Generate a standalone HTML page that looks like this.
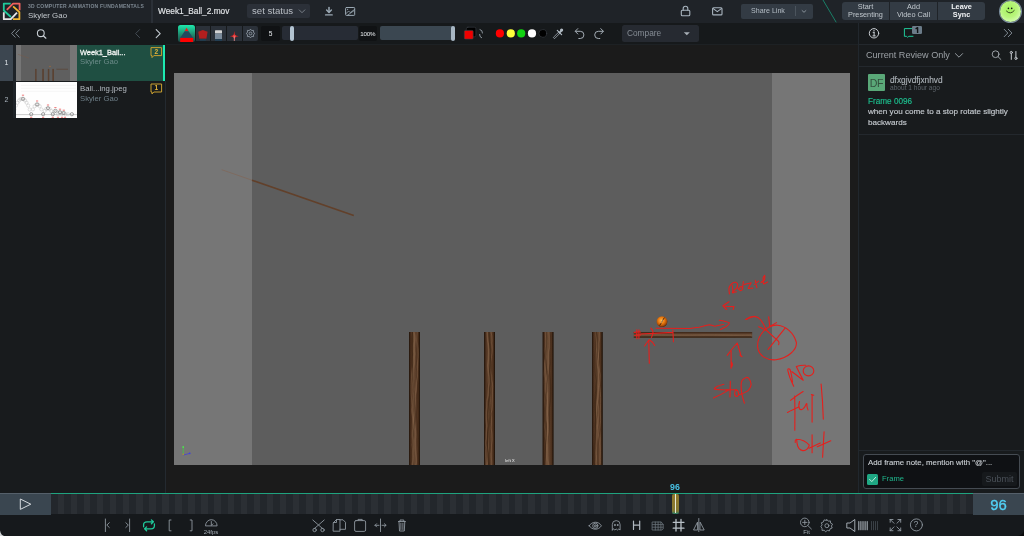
<!DOCTYPE html>
<html><head><meta charset="utf-8">
<style>
*{box-sizing:border-box;margin:0;padding:0}
html,body{width:1024px;height:536px;overflow:hidden;background:#16191c;font-family:"Liberation Sans",sans-serif;}
.a{position:absolute}
.t{position:absolute;white-space:nowrap;line-height:1;-webkit-font-smoothing:antialiased;will-change:transform}
svg{position:absolute;overflow:visible}
</style></head>
<body>
<div class="a" style="left:0;top:0;width:1024px;height:536px;overflow:hidden">

<!-- HEADER -->
<div class="a" style="left:0;top:0;width:1024px;height:23px;background:#1f2328"></div>
<div class="a" style="left:151px;top:0;width:2px;height:23px;background:#2b3037"></div>
<svg style="left:0;top:0" width="24" height="24" viewBox="0 0 24 24" fill="none" stroke-width="1.8" stroke-linejoin="round">
<path d="M10.7,3.6 H3.8 V10.5 L10.9,17" stroke="#1fc99a"/>
<path d="M6.8,9.9 L13.1,3.6 H19.6 V10.3" stroke="#f0625c"/>
<path d="M13.1,6.4 L19.4,12.2 V19.2 H12.9" stroke="#f2b631"/>
<path d="M3.8,12.3 V19.2 H10.8 L17,12.6" stroke="#e6e6e6"/>
</svg>
<div class="t" style="left:28.3px;top:4.2px;font-size:5px;font-weight:bold;letter-spacing:0.23px;color:#7c8791">3D COMPUTER ANIMATION FUNDAMENTALS</div>
<div class="t" style="left:28px;top:12px;font-size:7.9px;color:#c3c8cd">Skyler Gao</div>
<div class="t" style="left:158px;top:6.8px;font-size:8.3px;color:#e3e6e9;-webkit-text-stroke:0.15px #e3e6e9">Week1_Ball_2.mov</div>
<div class="a" style="left:247px;top:4px;width:63px;height:14px;background:#2b3038;border-radius:2px"></div>
<div class="t" style="left:252px;top:6px;font-size:9.6px;color:#b9bec4">set status</div>
<svg style="left:0;top:0" width="1024" height="22" fill="none" stroke-linecap="round" stroke-linejoin="round">
<path d="M299.2,9.9 L302,12.7 L304.8,9.9" stroke="#8c939a" stroke-width="0.8"/>
<!-- download -->
<path d="M329,7.4 V12" stroke="#9aa8b3" stroke-width="1.5"/>
<path d="M326.6,9.9 L329,12.4 L331.4,9.9" stroke="#9aa8b3" stroke-width="1.4"/>
<path d="M325.6,14.9 H332.2" stroke="#9aa8b3" stroke-width="1.4"/>
<!-- image -->
<rect x="345.6" y="7.5" width="9.1" height="7.9" rx="0.8" stroke="#9aa8b3" stroke-width="1"/>
<circle cx="347.6" cy="9.3" r="0.6" fill="#9aa8b3" stroke="none"/>
<path d="M346,13.6 L348.6,11 L350.2,12.6 L354.5,9.5 M347.6,15.2 L353.8,10.8" stroke="#9aa8b3" stroke-width="0.8"/>
<!-- lock -->
<rect x="681.3" y="10.3" width="8.5" height="5.4" rx="1" stroke="#a8b4be" stroke-width="1.1"/>
<path d="M683.2,10.3 V8.6 A2.3,2.3 0 0 1 687.8,8.6 V10.3" stroke="#a8b4be" stroke-width="1.1"/>
<!-- mail -->
<rect x="712.6" y="7.8" width="9.4" height="7.1" rx="1" stroke="#a8b4be" stroke-width="1.1"/>
<path d="M713.2,8.6 L717.3,11.6 L721.4,8.6" stroke="#a8b4be" stroke-width="1.1"/>
<!-- diagonal -->
<path d="M823,0 L836,22" stroke="#1a8a6e" stroke-width="0.9"/>
</svg>
<div class="a" style="left:741px;top:4px;width:72px;height:15px;background:#333b44;border-radius:2px"></div>
<div class="t" style="left:751px;top:8px;font-size:7.1px;color:#b3bcc4">Share Link</div>
<div class="a" style="left:795px;top:6px;width:1px;height:10px;background:#4b545d"></div>
<svg style="left:0;top:0" width="1024" height="22" fill="none"><path d="M801.8,10.3 L804,12.3 L806.2,10.3" stroke="#9aa4ad" stroke-width="0.8"/></svg>
<div class="a" style="left:842px;top:2px;width:143px;height:18px;background:#333b44;border-radius:3px"></div>
<div class="a" style="left:889px;top:2px;width:1px;height:18px;background:#1f2328"></div>
<div class="a" style="left:937px;top:2px;width:1px;height:18px;background:#1f2328"></div>
<div class="t" style="left:842px;top:3px;width:47px;text-align:center;font-size:7.3px;line-height:8.4px;color:#c0c7cd;white-space:normal">Start<br>Presenting</div>
<div class="t" style="left:890px;top:3px;width:47px;text-align:center;font-size:7.3px;line-height:8.4px;color:#c0c7cd;white-space:normal">Add<br>Video Call</div>
<div class="t" style="left:938px;top:3px;width:47px;text-align:center;font-size:7.3px;line-height:8.4px;color:#f2f4f6;font-weight:bold;white-space:normal">Leave<br>Sync</div>
<div class="a" style="left:999.5px;top:0.5px;width:21.4px;height:21.4px;border-radius:50%;background:radial-gradient(circle at 45% 40%,#a2f25a 0,#b8f47c 45%,#dcffc0 85%);box-shadow:0 0 0 1px #7d90a0"></div>
<svg style="left:0;top:0" width="1024" height="22" fill="none">
<circle cx="1008.4" cy="8.4" r="0.8" fill="#1a1a1a"/>
<circle cx="1011.7" cy="8.4" r="0.8" fill="#1a1a1a"/>
<path d="M1006.2,10.8 Q1010.3,15.2 1014.5,10.2" stroke="#2a3a1a" stroke-width="0.9"/>
</svg>

<!-- TOOLBAR ROW -->
<div class="a" style="left:0;top:23px;width:1024px;height:22px;background:#16191b"></div>
<div class="a" style="left:166px;top:44px;width:692px;height:1px;background:#1d2124"></div>
<div class="a" style="left:859px;top:44px;width:165px;height:1px;background:#23282d"></div>
<svg style="left:0;top:0" width="1024" height="45" fill="none" stroke-linecap="round" stroke-linejoin="round">
<path d="M15.2,29.6 L11.6,33.4 L15.2,37.2 M19.2,29.6 L15.6,33.4 L19.2,37.2" stroke="#8a949d" stroke-width="0.9"/>
<circle cx="40.8" cy="33.2" r="3.4" stroke="#c7ced4" stroke-width="1.1"/>
<path d="M43.3,35.7 L45.9,38.2" stroke="#c7ced4" stroke-width="1.2"/>
<path d="M139.6,29.6 L135.6,33.6 L139.6,37.6" stroke="#434b53" stroke-width="1"/>
<path d="M156.2,29.6 L160.2,33.6 L156.2,37.6" stroke="#c5ccd3" stroke-width="1.1"/>
</svg>
<!-- tools -->
<div class="a" style="left:178px;top:25px;width:17px;height:16.6px;border-radius:2.5px;background:linear-gradient(#1ee9ab,#1e8a6e 55%,#1d4a44)"></div>
<div class="a" style="left:195.5px;top:26px;width:14.8px;height:15px;background:#2b3139"></div>
<div class="a" style="left:211px;top:26px;width:15px;height:15px;background:#2b3139"></div>
<div class="a" style="left:227px;top:26px;width:15px;height:15px;background:#2b3139"></div>
<div class="a" style="left:243px;top:26px;width:15px;height:15px;background:#2b3139;border-radius:0 2px 2px 0"></div>
<svg style="left:0;top:0" width="1024" height="45" stroke-linejoin="round">
<path d="M186.6,27.8 L188.6,31.2 H184.6 Z" fill="#f01818"/>
<path d="M184.6,31.2 H188.6 L193.1,38 H180.2 Z" fill="#244a5e"/>
<rect x="180.2" y="37.9" width="13" height="4.1" fill="#ff0000"/>
<path d="M198.2,31.8 L202.9,29.9 L207.6,31.8 L206.4,38.8 H199.4 Z" fill="#b21e1e"/>
<rect x="200" y="38.8" width="5.8" height="2" fill="#203f52"/>
<rect x="215" y="30.3" width="7" height="3.2" fill="#d3d3d3" rx="0.5"/>
<rect x="215" y="33.5" width="7" height="5.5" fill="#7b8b9b"/>
<rect x="215" y="39" width="7" height="2" fill="#233e52"/>
<path d="M234.3,31 L235,35.3 L238.8,36.2 L235,37 L234.5,41 L233.8,37 L229.8,36.2 L233.6,35.3 Z" fill="#d8231f"/>
<circle cx="234.3" cy="36.2" r="1.6" fill="#e84040"/>
<path d="M234.3,36.2 V41" stroke="#f3a0a0" stroke-width="0.7"/>
</svg>
<svg style="left:245.8px;top:28.8px" width="9" height="9" viewBox="-4.5 -4.5 9 9" fill="none">
<path d="M0,-4.4 L1.1,-2.9 L3.1,-3.1 L2.9,-1.1 L4.4,0 L2.9,1.1 L3.1,3.1 L1.1,2.9 L0,4.4 L-1.1,2.9 L-3.1,3.1 L-2.9,1.1 L-4.4,0 L-2.9,-1.1 L-3.1,-3.1 L-1.1,-2.9 Z" stroke="#8a949e" stroke-width="0.9" stroke-linejoin="round"/>
<circle r="1.4" stroke="#8a949e" stroke-width="0.9"/>
</svg>
<div class="a" style="left:260.8px;top:26px;width:19px;height:14.5px;background:#101214;border-radius:2px"></div>
<div class="t" style="left:260.8px;top:30.5px;width:19px;text-align:center;font-size:6.6px;color:#e8ecef">5</div>
<div class="a" style="left:282.3px;top:26px;width:75.7px;height:14.3px;background:#272c35;border-radius:2px"></div>
<div class="a" style="left:290px;top:25.8px;width:3.8px;height:14.8px;background:#b3c4d2;border-radius:2px"></div>
<div class="a" style="left:359px;top:26px;width:17.5px;height:14.5px;background:#101214;border-radius:2px"></div>
<div class="t" style="left:359px;top:30.6px;width:17.5px;text-align:center;font-size:6.2px;color:#e8ecef;letter-spacing:-0.25px">100%</div>
<div class="a" style="left:379.7px;top:26px;width:75px;height:14.3px;background:#3b4751;border-radius:2px"></div>
<div class="a" style="left:451px;top:25.8px;width:3.8px;height:14.8px;background:#a7b6c3;border-radius:2px"></div>
<svg style="left:0;top:0" width="1024" height="45" fill="none" stroke-linecap="round" stroke-linejoin="round">
<rect x="466.3" y="27.2" width="9.6" height="9.6" rx="1.6" fill="#000" stroke="#3b4046" stroke-width="0.6"/>
<rect x="464.3" y="30.4" width="8.9" height="8.7" rx="1.2" fill="#ee0000" stroke="#3a3f45" stroke-width="0.6"/>
<path d="M480,29.5 Q482.6,30 482.5,33 M481.6,37.8 Q479.3,37 479.6,34.4" stroke="#a9b4bd" stroke-width="0.8"/>
<circle cx="499.9" cy="33.4" r="4.1" fill="#ff0000"/>
<circle cx="510.8" cy="33.4" r="4.1" fill="#ffff3c"/>
<circle cx="521.2" cy="33.4" r="4.1" fill="#12d212"/>
<circle cx="532" cy="33.4" r="4.1" fill="#ffffff"/>
<circle cx="542.8" cy="33.4" r="3.9" fill="#000" stroke="#3d4248" stroke-width="0.6"/>
<path d="M553.6,37.2 L558.8,32 L560,33.2 L554.8,38.4 Z" stroke="#a4adb6" stroke-width="0.8"/><path d="M557.3,30.4 L561.6,34.7" stroke="#b0bac3" stroke-width="1.2"/><circle cx="561.6" cy="30" r="1.6" fill="#b0bac3"/><path d="M559.5,32.6 L561.5,30.6" stroke="#b0bac3" stroke-width="2"/>
<path d="M577.8,28.6 L575.2,31.3 L577.8,34 M575.5,31.3 H580.3 A3.6,3.6 0 0 1 580.3,38.5 H578.8" stroke="#a4adb6" stroke-width="1"/>
<path d="M600.8,28.6 L603.4,31.3 L600.8,34 M603.1,31.3 H598.3 A3.6,3.6 0 0 0 598.3,38.5 H599.8" stroke="#a4adb6" stroke-width="1"/>
</svg>
<div class="a" style="left:622px;top:25.2px;width:77px;height:16.7px;background:#262a31;border-radius:2.5px"></div>
<div class="t" style="left:627.3px;top:29.2px;font-size:8.3px;color:#868d95">Compare</div>
<svg style="left:0;top:0" width="1024" height="45"><path d="M683.8,32.2 H689.8 L686.8,35.2 Z" fill="#a9b0b7"/></svg>
<!-- right toolbar -->
<svg style="left:0;top:0" width="1024" height="45" fill="none" stroke-linecap="round" stroke-linejoin="round">
<circle cx="874" cy="33.3" r="4.7" stroke="#c8cdd2" stroke-width="1"/>
<path d="M874.1,32.3 V35.9 M872.9,35.9 H875.3 M873.1,32.3 H874.1" stroke="#c8cdd2" stroke-width="1"/>
<circle cx="874" cy="30.7" r="0.65" fill="#c8cdd2"/>
<path d="M912.6,28.6 H904.4 V36.3 H906.6 L907.6,37.4 L908.7,36.3 H913" stroke="#1fc99a" stroke-width="1"/>
<path d="M1004.2,29.3 L1007.8,33 L1004.2,36.7 M1008.3,29.3 L1011.9,33 L1008.3,36.7" stroke="#8a949d" stroke-width="0.9"/>
</svg>
<div class="a" style="left:912px;top:26.1px;width:10px;height:8.2px;background:#6b7b88;border-radius:1.2px"></div>
<svg style="left:0;top:0" width="1024" height="45" fill="none"><path d="M915.6,28.9 L917.6,27.7 V33" stroke="#101214" stroke-width="1.4" stroke-linejoin="round"/></svg>

<!-- LEFT PANEL -->
<div class="a" style="left:0;top:45px;width:166px;height:448px;background:#181b1d"></div>
<div class="a" style="left:0;top:45px;width:13.1px;height:36px;background:#3c4650"></div>
<div class="a" style="left:13.1px;top:45px;width:2.7px;height:73px;background:#1e2328"></div>
<div class="t" style="left:0;top:59px;width:13px;text-align:center;font-size:7px;color:#dfe5ea">1</div>
<div class="t" style="left:0;top:95.5px;width:13px;text-align:center;font-size:7px;color:#aab4bd">2</div>
<div class="a" style="left:77.3px;top:45px;width:85.9px;height:36px;background:#1f4f42"></div>
<div class="a" style="left:163.2px;top:45px;width:2.2px;height:36px;background:#1de9b0"></div>
<div class="t" style="left:80px;top:48.6px;font-size:7.4px;color:#eef2f0;-webkit-text-stroke:0.3px #eef2f0">Week1_Ball...</div>
<div class="t" style="left:80px;top:58.3px;font-size:7.7px;color:#6d8c8a">Skyler Gao</div>
<div class="t" style="left:80px;top:85.3px;font-size:7.8px;color:#b4bac0">Ball...ing.jpeg</div>
<div class="t" style="left:80px;top:94.8px;font-size:7.7px;color:#6e7f88">Skyler Gao</div>
<svg style="left:0;top:0" width="170" height="120" fill="none" stroke-linejoin="round">
<path d="M151,47.6 H161.6 V55.6 H153.8 L152,57.6 V55.6 H151 Z" stroke="#c9a030" stroke-width="1"/>
<path d="M151,84 H161.6 V92 H153.8 L152,94 V92 H151 Z" stroke="#c9a030" stroke-width="1"/>
</svg>
<div class="t" style="left:151px;top:48.7px;width:10.6px;text-align:center;font-size:6.6px;font-weight:bold;color:#e5b53a">2</div>
<div class="t" style="left:151px;top:85.1px;width:10.6px;text-align:center;font-size:6.6px;font-weight:bold;color:#e5b53a">1</div>
<div class="a" style="left:164.6px;top:81px;width:1px;height:412px;background:#242a30"></div>
<!-- thumb 1 -->
<div class="a" style="left:15.8px;top:45px;width:61.5px;height:36px;background:#5f5f5f;overflow:hidden">
 <div class="a" style="left:0;top:0;width:4.9px;height:36px;background:#767676"></div>
 <div class="a" style="left:53.8px;top:0;width:7.7px;height:36px;background:#767676"></div>
 <svg style="left:0;top:0" width="62" height="36">
  <path d="M1.9,9.3 L13.1,13.1" stroke="#7a5a48" stroke-width="0.6" opacity="0.7"/>
  <rect x="19.1" y="23.9" width="1.5" height="12.1" fill="#5a4232"/>
  <rect x="26.2" y="23.9" width="1.7" height="12.1" fill="#5a4232"/>
  <rect x="31.8" y="23.9" width="1.5" height="12.1" fill="#5a4232"/>
  <rect x="36.3" y="23.9" width="1.7" height="12.1" fill="#5a4232"/>
  <rect x="40.4" y="23.8" width="11.6" height="0.7" fill="#5a4232"/>
  <circle cx="34" cy="21.3" r="0.6" fill="#b87030"/>
 </svg>
</div>
<!-- thumb 2 -->
<div class="a" style="left:16px;top:81.8px;width:61.2px;height:36px;background:#fefefe;overflow:hidden">
 <svg style="left:0;top:0" width="62" height="36" fill="none">
  <g stroke="#f4f4f4" stroke-width="0.9"><path d="M5,3.4 H60" /><path d="M5,6.3 H60" /><path d="M5,9.3 H60" /></g>
  <path d="M0,32.6 H62" stroke="#9a9a9a" stroke-width="0.5"/>
  <g stroke="#b4b4b4" stroke-width="0.4"><circle cx="-3.0" cy="32.2" r="1.6"/><circle cx="-1.5" cy="27.5" r="1.6"/><circle cx="0.0" cy="23.6" r="1.6"/><circle cx="1.5" cy="20.7" r="1.6"/><circle cx="3.1" cy="18.5" r="1.6"/><circle cx="4.6" cy="17.2" r="1.6"/><circle cx="6.1" cy="16.8" r="1.6"/><circle cx="7.6" cy="17.2" r="1.6"/><circle cx="9.1" cy="18.5" r="1.6"/><circle cx="10.6" cy="20.7" r="1.6"/><circle cx="12.2" cy="23.6" r="1.6"/><circle cx="13.7" cy="27.5" r="1.6"/><circle cx="15.2" cy="32.2" r="1.6"/><circle cx="16.9" cy="27.4" r="1.6"/><circle cx="18.6" cy="24.2" r="1.6"/><circle cx="20.3" cy="22.6" r="1.6"/><circle cx="22.0" cy="22.6" r="1.6"/><circle cx="23.7" cy="24.2" r="1.6"/><circle cx="25.4" cy="27.4" r="1.6"/><circle cx="27.1" cy="32.2" r="1.6"/><circle cx="28.7" cy="28.9" r="1.6"/><circle cx="30.3" cy="26.9" r="1.6"/><circle cx="31.9" cy="26.2" r="1.6"/><circle cx="33.6" cy="26.9" r="1.6"/><circle cx="35.2" cy="28.9" r="1.6"/><circle cx="36.8" cy="32.2" r="1.6"/><circle cx="38.5" cy="29.2" r="1.6"/><circle cx="40.3" cy="29.2" r="1.6"/><circle cx="42.0" cy="32.2" r="1.6"/><circle cx="43.3" cy="30.4" r="1.6"/><circle cx="44.5" cy="30.4" r="1.6"/><circle cx="45.8" cy="32.2" r="1.6"/><circle cx="47.0" cy="31.1" r="1.6"/><circle cx="48.3" cy="31.1" r="1.6"/><circle cx="49.5" cy="32.2" r="1.6"/><circle cx="52.0" cy="32.2" r="1.6"/><circle cx="55.9" cy="32.2" r="1.6"/></g>
  <g stroke="#6a6a6a" stroke-width="0.5"><circle cx="7.0" cy="16.8" r="1.6"/><circle cx="15.2" cy="32.2" r="1.6"/><circle cx="21.1" cy="22.4" r="1.6"/><circle cx="27.1" cy="32.2" r="1.6"/><circle cx="32.0" cy="26.2" r="1.6"/><circle cx="36.8" cy="32.2" r="1.6"/><circle cx="55.9" cy="32.2" r="1.6"/><circle cx="39.4" cy="28.8" r="1.6"/><circle cx="44.0" cy="30.2" r="1.6"/><circle cx="47.6" cy="31.0" r="1.6"/></g>
  <g stroke="#ee6a6a" stroke-width="0.9"><path d="M5.9,13.2 h2.2" /><path d="M20.0,19.0 h2.2" /><path d="M30.9,23.0 h2.2" /><path d="M38.3,25.6 h2.2" /><path d="M42.9,27.2 h2.2" /><path d="M46.7,28.2 h2.2" /><path d="M14.1,35.3 h2.2" /><path d="M26.0,35.3 h2.2" /><path d="M35.7,35.3 h2.2" /><path d="M40.9,35.3 h2.2" /><path d="M44.9,35.3 h2.2" /><path d="M47.9,35.3 h2.2" /></g>
 </svg>
</div>
<!-- VIEWER -->
<div class="a" style="left:166px;top:45px;width:692px;height:448px;background:#1b1b1b"></div>
<div class="a" style="left:174px;top:73px;width:676px;height:392px;background:#5d5d5d"></div>
<div class="a" style="left:174px;top:73px;width:78px;height:392px;background:#767676"></div>
<div class="a" style="left:772px;top:73px;width:78px;height:392px;background:#767676"></div>
<svg style="left:0;top:0" width="1024" height="536">
<defs>
<linearGradient id="wood" x1="0" x2="1" y1="0" y2="0">
<stop offset="0" stop-color="#2e1c10"/><stop offset="0.18" stop-color="#4e3220"/><stop offset="0.45" stop-color="#654832"/><stop offset="0.6" stop-color="#5c3f2b"/><stop offset="0.85" stop-color="#4a2f1c"/><stop offset="1" stop-color="#2a190d"/>
</linearGradient>
<clipPath id="vclip"><rect x="174" y="73" width="676" height="392"/></clipPath>
<linearGradient id="woodedge" x1="0" x2="1" y1="0" y2="0">
<stop offset="0" stop-color="#24160c" stop-opacity="0.9"/><stop offset="0.16" stop-color="#24160c" stop-opacity="0"/><stop offset="0.84" stop-color="#24160c" stop-opacity="0"/><stop offset="1" stop-color="#1e1209" stop-opacity="0.9"/>
</linearGradient>
<linearGradient id="woodh" x1="0" x2="0" y1="0" y2="1">
<stop offset="0" stop-color="#3a2416"/><stop offset="0.35" stop-color="#5e422e"/><stop offset="0.6" stop-color="#6e523c"/><stop offset="1" stop-color="#34200f"/>
</linearGradient>
<radialGradient id="ball" cx="0.45" cy="0.4" r="0.6">
<stop offset="0" stop-color="#ffb848"/><stop offset="0.5" stop-color="#e8780e"/><stop offset="0.85" stop-color="#a04808"/><stop offset="1" stop-color="#5a2404"/>
</radialGradient>
</defs>
<path d="M221.7,169.7 L252,180.2" stroke="#86604a" stroke-width="0.9" opacity="0.55"/>
<path d="M252,180.2 L353.8,215.5" stroke="#62402a" stroke-width="1.6"/>
<rect x="409" y="332" width="11" height="133" fill="url(#wood)"/><g clip-path="url(#vclip)"><path d="M413.5,332 Q412.9,336.8 413.9,341.5 Q412.8,348.2 413.6,354.9 Q412.9,361.4 412.5,367.9 Q411.8,372.3 411.5,376.6 Q410.7,384.8 411.0,392.9 Q411.7,400.0 412.1,407.2 Q411.7,413.2 413.2,419.1 Q412.3,427.4 412.7,435.7 Q413.1,440.3 412.3,444.9 Q412.6,449.8 412.4,454.7 Q411.6,460.6 412.6,465.0" stroke="#8d6c52" stroke-width="0.8" opacity="0.45" fill="none"/><path d="M412.9,332 Q412.4,339.4 412.7,346.8 Q412.3,353.7 412.6,360.7 Q412.3,368.6 413.1,376.6 Q413.9,383.5 413.1,390.3 Q413.8,398.0 412.6,405.6 Q413.0,410.2 412.4,414.8 Q411.5,419.6 412.4,424.3 Q412.9,431.7 413.0,439.0 Q413.2,447.4 412.6,455.8 Q412.6,462.8 412.8,465.0" stroke="#321e10" stroke-width="1.5" opacity="0.4" fill="none"/><path d="M416.9,332 Q416.3,338.4 417.3,344.7 Q418.5,352.2 417.7,359.8 Q417.2,367.9 417.2,376.0 Q416.5,383.3 416.0,390.7 Q414.7,395.5 415.1,400.3 Q414.2,408.2 414.2,416.0 Q413.8,422.0 415.1,427.9 Q415.9,434.2 415.2,440.4 Q415.2,448.5 416.1,456.6 Q416.7,462.7 415.8,465.0" stroke="#8d6c52" stroke-width="1.6" opacity="0.45" fill="none"/><path d="M412.6,332 Q411.7,336.9 411.9,341.8 Q411.6,348.2 412.2,354.6 Q411.8,358.6 412.0,362.7 Q412.9,369.5 413.0,376.3 Q413.5,382.9 413.3,389.5 Q414.4,393.7 414.3,398.0 Q414.4,406.4 415.0,414.8 Q414.8,420.8 414.0,426.7 Q412.9,431.1 413.0,435.4 Q411.9,440.2 412.6,445.0 Q411.4,449.0 411.8,453.0 Q412.1,458.8 411.0,464.6 Q410.5,471.7 411.0,465.0" stroke="#321e10" stroke-width="1.1" opacity="0.4" fill="none"/><path d="M413.8,332 Q415.2,336.6 414.6,341.2 Q413.7,347.6 414.6,353.9 Q413.9,358.4 414.2,362.9 Q412.8,371.1 413.4,379.2 Q412.7,388.0 413.4,396.7 Q412.9,403.4 412.3,410.1 Q413.1,419.0 413.2,427.9 Q412.3,433.2 412.8,438.5 Q413.4,446.4 412.9,454.3 Q413.2,459.9 412.3,465.0" stroke="#8d6c52" stroke-width="1.6" opacity="0.45" fill="none"/><path d="M416.4,332 Q417.3,340.0 417.2,348.1 Q416.9,353.2 417.2,358.3 Q416.2,362.5 416.1,366.6 Q417.3,371.9 416.6,377.2 Q418.1,383.4 417.6,389.7 Q416.9,398.5 417.3,407.2 Q416.3,412.4 416.6,417.5 Q417.7,424.6 417.5,431.7 Q418.3,438.1 417.9,444.5 Q418.8,449.0 418.0,453.4 Q418.0,461.3 418.0,465.0" stroke="#321e10" stroke-width="0.9" opacity="0.4" fill="none"/></g><rect x="409" y="332" width="11" height="133" fill="url(#woodedge)"/>
<rect x="484" y="332" width="11" height="133" fill="url(#wood)"/><g clip-path="url(#vclip)"><path d="M491.1,332 Q492.4,337.7 491.8,343.3 Q492.6,349.3 491.6,355.3 Q490.4,362.9 490.8,370.5 Q491.9,375.3 491.8,380.0 Q493.1,384.8 492.5,389.5 Q492.5,396.8 492.2,404.1 Q492.5,408.7 491.0,413.4 Q491.9,420.6 491.1,427.9 Q492.2,434.1 492.0,440.2 Q491.3,445.3 491.4,450.3 Q491.0,455.5 491.6,460.7 Q492.0,466.8 490.7,465.0" stroke="#8d6c52" stroke-width="1.1" opacity="0.45" fill="none"/><path d="M489.3,332 Q489.6,338.9 490.2,345.8 Q490.3,354.4 490.2,363.0 Q489.5,369.6 489.1,376.2 Q489.1,381.2 487.9,386.1 Q488.3,390.9 487.8,395.8 Q487.7,402.6 487.4,409.4 Q487.0,416.1 488.1,422.9 Q487.4,429.7 487.5,436.5 Q487.6,444.4 487.5,452.2 Q487.9,460.0 488.5,465.0" stroke="#321e10" stroke-width="1.3" opacity="0.4" fill="none"/><path d="M489.5,332 Q489.7,338.6 490.0,345.1 Q490.8,351.8 489.9,358.5 Q491.3,366.0 490.8,373.4 Q491.8,378.7 491.0,384.0 Q489.8,392.2 490.1,400.4 Q489.1,406.7 489.1,412.9 Q489.9,417.2 489.5,421.6 Q489.5,430.1 488.7,438.6 Q489.0,445.9 487.8,453.2 Q488.4,462.0 487.1,465.0" stroke="#8d6c52" stroke-width="1.1" opacity="0.45" fill="none"/><path d="M489.4,332 Q489.2,340.9 490.2,349.9 Q489.9,356.1 490.3,362.2 Q490.5,367.2 489.8,372.2 Q489.8,376.3 490.0,380.4 Q490.0,384.5 489.6,388.5 Q490.0,395.1 488.5,401.7 Q488.3,409.6 489.6,417.6 Q489.6,422.9 488.5,428.2 Q487.9,433.6 487.6,438.9 Q487.5,447.5 488.4,456.0 Q489.1,460.8 489.4,465.0" stroke="#321e10" stroke-width="1.4" opacity="0.4" fill="none"/><path d="M487.2,332 Q487.3,336.3 487.7,340.6 Q488.5,344.9 488.7,349.3 Q489.0,357.3 487.7,365.3 Q488.1,369.6 488.6,374.0 Q489.5,379.7 488.7,385.4 Q488.4,390.7 487.9,396.1 Q486.7,401.2 486.9,406.4 Q486.2,410.7 486.2,414.9 Q486.1,420.5 486.8,426.0 Q486.1,432.5 486.1,439.0 Q485.1,443.1 486.0,447.2 Q485.4,454.8 486.1,462.5 Q485.9,468.9 487.2,465.0" stroke="#8d6c52" stroke-width="1.5" opacity="0.45" fill="none"/><path d="M489.1,332 Q489.3,338.5 489.9,345.0 Q491.1,351.5 490.4,358.0 Q491.2,363.7 491.2,369.4 Q490.8,376.6 490.9,383.8 Q489.6,388.1 490.1,392.3 Q489.1,400.1 489.5,407.8 Q490.6,412.2 490.3,416.6 Q489.5,424.0 489.8,431.3 Q489.0,436.8 489.7,442.2 Q490.3,448.5 489.1,454.7 Q488.6,463.6 489.2,465.0" stroke="#321e10" stroke-width="1.6" opacity="0.4" fill="none"/></g><rect x="484" y="332" width="11" height="133" fill="url(#woodedge)"/>
<rect x="542.7" y="332" width="10.7" height="133" fill="url(#wood)"/><g clip-path="url(#vclip)"><path d="M547.0,332 Q546.2,337.8 545.8,343.6 Q545.2,349.9 545.8,356.3 Q544.8,362.8 544.7,369.4 Q543.8,373.8 544.7,378.3 Q544.2,382.4 544.7,386.5 Q545.2,393.4 544.8,400.3 Q545.8,407.6 545.3,414.9 Q546.0,420.9 544.9,426.8 Q545.4,431.6 545.4,436.3 Q546.6,440.5 546.2,444.7 Q547.1,451.9 546.8,459.0 Q546.8,463.7 546.8,465.0" stroke="#8d6c52" stroke-width="1.5" opacity="0.45" fill="none"/><path d="M549.7,332 Q550.6,340.1 549.9,348.3 Q549.6,355.7 550.3,363.1 Q549.6,367.2 549.5,371.4 Q550.0,375.9 550.3,380.5 Q550.8,387.6 550.6,394.7 Q550.6,401.2 549.4,407.6 Q549.5,415.4 549.4,423.1 Q549.3,430.4 548.3,437.7 Q547.4,443.0 547.3,448.2 Q547.5,455.9 546.6,463.5 Q546.4,472.4 546.6,465.0" stroke="#321e10" stroke-width="1.2" opacity="0.4" fill="none"/><path d="M549.0,332 Q549.5,339.8 549.3,347.7 Q548.4,352.1 548.5,356.4 Q548.4,364.2 548.0,371.9 Q547.0,375.9 546.9,380.0 Q547.5,387.4 547.4,394.7 Q547.4,400.2 547.4,405.6 Q547.8,412.0 546.5,418.3 Q548.0,423.3 547.7,428.3 Q548.3,432.4 547.6,436.5 Q547.1,445.3 547.5,454.1 Q547.4,459.2 548.5,464.2 Q548.1,471.1 547.7,465.0" stroke="#8d6c52" stroke-width="1.6" opacity="0.45" fill="none"/><path d="M546.1,332 Q546.9,340.1 546.1,348.2 Q546.6,355.7 545.5,363.2 Q544.1,369.7 544.7,376.1 Q544.3,382.6 544.7,389.0 Q544.3,393.7 544.7,398.4 Q545.2,406.6 544.7,414.8 Q545.6,423.0 544.7,431.2 Q544.8,438.8 545.7,446.3 Q546.5,452.2 545.4,458.1 Q545.1,465.0 545.1,465.0" stroke="#321e10" stroke-width="1.0" opacity="0.4" fill="none"/><path d="M545.6,332 Q545.6,336.5 546.4,341.0 Q545.7,349.7 545.8,358.4 Q545.2,364.9 545.1,371.5 Q546.2,380.3 546.0,389.0 Q547.4,396.2 547.0,403.4 Q546.4,410.1 547.5,416.8 Q548.0,424.5 547.4,432.2 Q546.3,439.4 546.9,446.6 Q546.4,455.2 546.0,463.9 Q546.2,469.6 545.5,465.0" stroke="#8d6c52" stroke-width="1.6" opacity="0.45" fill="none"/><path d="M546.8,332 Q546.6,339.3 546.3,346.6 Q545.2,352.5 545.5,358.5 Q546.0,363.5 546.5,368.6 Q547.9,373.7 547.4,378.8 Q546.4,385.0 546.6,391.3 Q545.6,395.7 546.2,400.2 Q546.0,405.4 545.6,410.6 Q545.7,419.0 546.2,427.5 Q546.0,433.5 546.3,439.6 Q545.3,445.3 545.2,451.0 Q545.0,459.8 544.7,465.0" stroke="#321e10" stroke-width="1.3" opacity="0.4" fill="none"/></g><rect x="542.7" y="332" width="10.7" height="133" fill="url(#woodedge)"/>
<rect x="592" y="332" width="10.6" height="133" fill="url(#wood)"/><g clip-path="url(#vclip)"><path d="M599.2,332 Q598.4,337.1 598.7,342.2 Q599.5,348.2 598.5,354.2 Q598.0,362.4 599.4,370.6 Q600.5,374.8 599.9,379.0 Q599.0,385.3 600.2,391.7 Q601.0,397.7 600.6,403.6 Q600.1,411.9 600.6,420.2 Q600.2,424.7 599.8,429.3 Q600.6,436.7 600.6,444.1 Q600.5,451.3 600.6,458.6 Q600.6,465.3 599.5,465.0" stroke="#8d6c52" stroke-width="1.0" opacity="0.45" fill="none"/><path d="M599.5,332 Q598.5,339.2 599.1,346.5 Q599.6,351.7 599.4,357.0 Q598.9,361.5 598.4,366.1 Q597.7,373.0 598.1,379.9 Q597.1,386.9 596.9,393.9 Q597.7,400.2 598.0,406.5 Q597.4,415.0 597.9,423.4 Q598.9,428.6 599.1,433.8 Q598.5,439.4 597.9,444.9 Q597.3,452.3 597.7,459.7 Q597.7,467.0 598.7,465.0" stroke="#321e10" stroke-width="0.8" opacity="0.4" fill="none"/><path d="M596.4,332 Q596.1,338.1 596.9,344.2 Q597.2,352.2 597.5,360.2 Q597.6,365.2 598.6,370.2 Q597.7,378.3 597.9,386.4 Q598.6,394.2 597.4,402.0 Q596.5,408.5 596.7,415.0 Q597.8,421.1 597.1,427.2 Q596.4,431.9 596.8,436.6 Q595.5,445.5 596.0,454.4 Q596.6,458.7 595.7,463.0 Q597.0,471.4 596.3,465.0" stroke="#8d6c52" stroke-width="1.5" opacity="0.45" fill="none"/><path d="M596.4,332 Q597.4,336.9 597.4,341.9 Q597.4,346.0 597.8,350.2 Q597.0,356.0 597.4,361.9 Q596.9,365.9 596.9,369.9 Q597.4,378.7 596.0,387.5 Q596.5,392.5 595.7,397.6 Q594.7,405.7 595.5,413.8 Q596.2,420.2 595.2,426.5 Q595.8,431.5 594.9,436.5 Q595.4,440.6 594.6,444.8 Q593.4,452.6 594.0,460.4 Q594.0,464.7 595.0,465.0" stroke="#321e10" stroke-width="1.4" opacity="0.4" fill="none"/><path d="M599.4,332 Q600.1,337.7 598.9,343.4 Q599.0,350.5 598.3,357.6 Q597.0,363.1 597.8,368.7 Q598.5,376.5 598.8,384.3 Q597.7,393.0 597.6,401.7 Q599.1,408.1 598.7,414.5 Q598.3,420.4 598.1,426.3 Q598.0,432.8 599.1,439.3 Q600.1,447.3 599.7,455.3 Q599.5,463.2 600.0,465.0" stroke="#8d6c52" stroke-width="1.1" opacity="0.45" fill="none"/><path d="M596.6,332 Q595.5,339.9 595.6,347.8 Q594.4,355.6 595.0,363.4 Q594.7,367.5 595.1,371.7 Q596.5,380.6 596.0,389.5 Q594.7,394.8 595.0,400.1 Q595.1,406.6 595.5,413.1 Q595.6,418.3 595.3,423.5 Q596.3,430.8 595.9,438.2 Q596.1,445.5 595.0,452.9 Q594.8,458.3 595.1,463.8 Q594.3,471.5 594.4,465.0" stroke="#321e10" stroke-width="1.0" opacity="0.4" fill="none"/></g><rect x="592" y="332" width="10.6" height="133" fill="url(#woodedge)"/>

<rect x="633.7" y="332" width="118.5" height="5.8" fill="url(#woodh)"/><path d="M636,334.6 C660,334 680,335.5 700,334.8 C720,334.2 735,335.6 751,334.9" stroke="#8a6a50" stroke-width="0.7" opacity="0.5" fill="none"/><path d="M640,336.3 C665,336.8 690,336 715,336.6 C730,336.9 740,336.2 751,336.5" stroke="#2a180c" stroke-width="0.6" opacity="0.5" fill="none"/>
<circle cx="662" cy="321.6" r="5.4" fill="url(#ball)"/>
<path d="M664.4,317.6 L662.2,321 L661.6,322.4 L659.6,325.6" stroke="#3a1a05" stroke-width="0.9" fill="none"/><path d="M662.8,319.6 L661,323.2" stroke="#fff0c0" stroke-width="0.6" opacity="0.8"/>
<path d="M183.2,447 V454.2" stroke="#4ac04a" stroke-width="0.9"/>
<circle cx="183.2" cy="447" r="0.9" fill="#50e050"/>
<path d="M183.6,455 L189.7,453.4" stroke="#4848c8" stroke-width="0.9"/>
<circle cx="189.7" cy="453.3" r="0.9" fill="#4040e0"/>
<circle cx="183.2" cy="454.2" r="0.7" fill="#c89020"/>
</svg>
<div class="t" style="left:505px;top:458.5px;font-size:4px;color:#d0d0d0;font-weight:bold">left X</div>
<svg style="left:0;top:0" width="1024" height="536" fill="none" stroke="#e61f1c" stroke-width="1.1" stroke-linecap="round" stroke-linejoin="round">
<!-- long arrow -->
<path d="M656.1,328.2 L690,328.5 C693,328 696,327.6 699.2,327.3 C703,326.5 706,325.3 709.3,324.8 C711.5,324.8 713,326 714.9,326.2 C718,325.8 721,324.8 723.8,324.5"/>
<path d="M719.3,320.3 C722.5,320.8 726.5,321.5 729.4,322.9 C728.8,324.5 727.5,325.8 726,326.8 C724,327.8 722,328.8 720.4,329.6"/>
<path d="M746.2,319.5 C748,318.5 750,317.6 752,317.3" opacity="0.8"/>
<!-- on platform -->
<path d="M636.8,329.8 V338.7 M638.9,329.8 V338.7 M634.2,332.4 L640.5,332 M634.6,335.5 L640.5,335"/>
<path d="M640.5,334 L672.9,332.4 M672.9,330.3 L673.4,341.8"/>
<path d="M650.9,328.2 C652.5,329.5 653.2,331 653,332.5 C652.8,334.5 652,336.5 651.4,337.6"/>
<path d="M644.6,346 C646,344 648,341 649.3,339.7 C651.5,341 653.5,343 654.6,345.4 M648.8,341 L649.3,363.2"/>
<!-- arrow up right -->
<path d="M731.1,351.4 V368.2 M731.5,362 C732.5,363.5 732.6,365.5 731.5,366.8"/>
<path d="M727.2,355.3 C730,351.5 734,346.5 737.2,343 C738.5,347 740,352 741.1,356.4 M740,355.2 L742,356.6"/>
<!-- Stop -->
<path d="M723.9,384.2 C719.5,385.3 715,387 714.2,388.7 C716,390 723,389.6 728.4,390.1 C724,393 718,396 713.5,398"/>
<path d="M730.3,381.2 L730,396.9 M726.1,389.8 L736.6,389.8"/>
<path d="M736.5,389.8 C734,391 734,396 736.5,396.5 C739,396.5 739.5,391.5 736.5,389.8"/>
<path d="M739,394.6 C741.5,394.5 743.5,393.5 747.8,390.9 C751,388 751.5,384 750.8,382.7 C750,378.5 747.5,377 746.3,377.5 C743,378.5 741,381 741.1,384.9 C741,388 741.5,391.5 741.8,393.9 C742.5,397 743.5,400.5 744.4,403.2"/>
<!-- Rotate scribble -->
<path d="M729.4,293.9 C729,291 728.8,289 729,287.7 C729.8,285.5 731,284 732.3,283.2 C733.5,282.5 735,282.2 736,282.4 C737.2,283 737.8,283.6 737.7,284.4 C737.5,286 737.2,287 736.8,287.7 C736,289 735.3,289.6 734.4,290.2 C733.5,291 732.8,291.8 732.3,292.6 C733.6,292.4 735,292 736.4,291.8"/>
<path d="M732.3,285.2 L733.1,293"/>
<path d="M737.7,287.7 C738.5,289.2 739.5,290.3 740.5,290.6 C741.6,290.5 742.4,289.8 742.6,288.9 C742.6,287.5 742,286.6 741.3,286.5 C740.2,286.5 739.5,287.5 740,288.5 M742.6,288.9 C742.8,286 743,283.5 743.4,281.5"/>
<path d="M744.6,284.4 C746.8,283.8 749,283.3 751.2,282.8 C750,284.8 749,286.8 748.3,288.5 C749.8,288.4 751.3,288.2 752.8,288.1"/>
<path d="M755.3,280.3 C755.8,283 756.3,285.5 756.9,287.7 M754.5,284.4 C756,283 757.3,282 758.6,281.1"/>
<path d="M761,282.4 C762.2,281.8 763.4,281 764.3,280.3 C764.8,278.5 765,276.5 764.7,275.4 C764,276 763.3,277 763.1,277.9 C763,280 763.2,282 763.5,284 C765,283.4 766.5,282.6 767.6,282"/>
<!-- small back arrow -->
<path d="M729,301.7 L722.9,305.8 L726.6,309.5 M724.9,306.2 C728,306.4 731,306.5 734,306.6 C733.8,307.5 733.4,308.5 733.1,309.5"/>
<!-- curve arrow to circle -->
<path d="M745.7,319.5 C748.5,317.5 751.5,316.4 754.5,316.4 C757.5,316.8 759.5,318.3 760.8,320 C762.5,322.5 764,325 765,327.3 L766.6,330"/>
<path d="M758.7,326.8 L766,330 M768.7,316.9 L769.7,326.3 M770.2,326.3 L776.5,322.6"/>
<!-- circle -->
<path d="M766,328.9 C770,326 774,325 777.5,325.2 C786,326 794,333 796.4,342.5 C797,350 788,358 776,359.8 C767,360.5 759,356 757.7,347.7 C757,340 761,333 766,328.9"/>
<path d="M766,330 L778.6,341.4 C779.2,342.5 779.2,343.8 778.6,344.6 M784.9,328.4 L768.1,349.3"/>
<!-- NO -->
<path d="M793.7,386.3 C791,381 788.5,374 787.7,370 C787.8,368.5 789,368.5 790,369.5 C791,372 792,378 792.5,382 M792,371.7 C795,374 800,378 803.2,380.3 C801,376 798,370 796.3,366.6 C799,365.6 803,365.2 805.7,365.3"/>
<ellipse cx="808.5" cy="370.9" rx="5.3" ry="5"/>
<!-- Fall -->
<path d="M803.1,391.5 C799,394 794,397.5 790.5,400.4 M794.7,396 C795,408 795,420 794.8,430.3 M787.5,412.4 C791,410.5 795,409 798.7,407.1"/>
<path d="M799.5,401.5 C798.8,404 798.5,407 799.5,409 C801.5,410.5 804,409 805.5,405.5 C806,404 806.5,403.5 806.8,403.5 C806.8,406 807.2,408.5 808,410"/>
<path d="M812.1,394.5 L812.1,422.1 M811.4,394.6 L813.8,395.2"/>
<path d="M821.1,384 C822.2,395 823,408 823.3,419.1"/>
<!-- OFF -->
<path d="M795.2,442.5 C795,441 795.5,439.6 796.4,439.3 C800.5,439.3 805.5,440.8 809.3,445.2 C808.2,449 805.5,450.8 802.8,450.6 C799.8,450.2 797.8,447.5 797.2,444.2 C797,441.8 796.8,440.2 796.4,439.3"/>
<path d="M812.1,434.8 L812.1,452.7 M809.1,448.2 L820.3,443"/>
<path d="M824.1,431.8 C823.6,440 823,450 822.6,457.2 M817.3,446.7 L830.8,440.7"/>
</svg>

<!-- RIGHT PANEL -->
<div class="a" style="left:858px;top:23px;width:1px;height:470px;background:#21272d"></div>
<div class="a" style="left:859px;top:45px;width:165px;height:448px;background:#181b1d"></div>
<div class="t" style="left:865.6px;top:51.2px;font-size:9.1px;color:#9ba0a5">Current Review Only</div>
<svg style="left:0;top:0" width="1024" height="536" fill="none" stroke-linecap="round" stroke-linejoin="round">
<path d="M955.4,53.6 L959,57.2 L962.6,53.6" stroke="#a3a9af" stroke-width="0.9"/>
<circle cx="995.6" cy="54.2" r="3.4" stroke="#a9b0b6" stroke-width="0.9"/>
<path d="M998.1,56.7 L1000.9,59.5" stroke="#a9b0b6" stroke-width="0.9"/>
<path d="M1011.3,51.5 V59.4 M1015.9,51.5 V59.4" stroke="#c8cdd2" stroke-width="1"/>
<circle cx="1011.3" cy="52.5" r="1.1" fill="#1a1d20" stroke="#c8cdd2" stroke-width="0.9"/>
<circle cx="1015.9" cy="58.3" r="1.1" fill="#1a1d20" stroke="#c8cdd2" stroke-width="0.9"/>
</svg>
<div class="a" style="left:859px;top:65.5px;width:165px;height:1px;background:#23282d"></div>
<div class="a" style="left:868px;top:74.4px;width:17px;height:16.6px;background:#5aa878;border-radius:1px"></div>
<div class="t" style="left:868px;top:77.6px;width:17px;text-align:center;font-size:10.6px;color:#33503e;letter-spacing:-0.4px">DF</div>
<div class="t" style="left:889.6px;top:76.1px;font-size:8.3px;color:#aeb4ba;-webkit-text-stroke:0.12px #aeb4ba">dfxgjvdfjxnhvd</div>
<div class="t" style="left:889.6px;top:84.8px;font-size:6.6px;color:#5d646b">about 1 hour ago</div>
<div class="t" style="left:867.8px;top:98px;font-size:8.2px;color:#1dbf8e;-webkit-text-stroke:0.15px #1dbf8e">Frame 0096</div>
<div class="t" style="left:868px;top:107.1px;font-size:8.1px;color:#c5cacf;line-height:10.6px;white-space:normal;width:150px;-webkit-text-stroke:0.15px #c5cacf">when you come to a stop rotate slightly backwards</div>
<div class="a" style="left:859px;top:133.5px;width:165px;height:1px;background:#23282d"></div>
<div class="a" style="left:859px;top:449.5px;width:165px;height:1px;background:#23282d"></div>
<div class="a" style="left:863px;top:454.3px;width:157px;height:34.5px;background:#0f1114;border:1px solid #454b52;border-radius:3px"></div>
<div class="t" style="left:868px;top:458.7px;font-size:7.85px;color:#c8cdd2;-webkit-text-stroke:0.12px #c8cdd2">Add frame note, mention with "@"...</div>
<div class="a" style="left:866.6px;top:473.5px;width:11.8px;height:11.6px;background:#1fa884;border-radius:1.5px"></div>
<svg style="left:0;top:0" width="1024" height="536" fill="none"><path d="M869.6,479.4 L871.8,481.6 L875.6,477.4" stroke="#d8f5ea" stroke-width="0.9" stroke-linecap="round" stroke-linejoin="round"/></svg>
<div class="t" style="left:881.9px;top:475.2px;font-size:7.6px;color:#1fb88e">Frame</div>
<div class="a" style="left:981.6px;top:472px;width:35px;height:14.2px;background:#16191c;border-radius:2px"></div>
<div class="t" style="left:981.6px;top:474.8px;width:35px;text-align:center;font-size:9px;color:#4a5058">Submit</div>

<!-- TIMELINE -->
<div class="a" style="left:0;top:514px;width:1024px;height:22px;background:#16191c"></div>
<div class="a" style="left:51px;top:493px;width:922px;height:21px;background:repeating-linear-gradient(90deg,#23272c 0 6.539px,#2b2f34 6.539px 13.078px)"></div>
<div class="a" style="left:51px;top:492.6px;width:922px;height:1.4px;background:#1fa37f"></div>
<div class="a" style="left:0;top:493px;width:51px;height:22px;background:#3a4650"></div>
<div class="a" style="left:0;top:492.6px;width:51px;height:1.2px;background:#55606a"></div>
<div class="a" style="left:972.7px;top:493px;width:51.3px;height:22px;background:#3a4650"></div>
<div class="a" style="left:973px;top:492.6px;width:51px;height:1.2px;background:#55606a"></div>
<svg style="left:0;top:0" width="1024" height="536" fill="none"><path d="M20.3,499 L30.8,504.2 L20.3,509.4 Z" stroke="#d5dade" stroke-width="1" stroke-linejoin="round"/></svg>
<div class="a" style="left:672px;top:494px;width:6.6px;height:19.5px;background:linear-gradient(rgba(190,150,40,0.7),rgba(170,150,50,0.7) 85%,rgba(40,150,120,0.8));border-radius:2px"></div>
<div class="a" style="left:675.1px;top:493.5px;width:0.9px;height:19px;background:#e8ead8"></div>
<div class="t" style="left:665px;top:483.4px;width:20px;text-align:center;font-size:8.8px;font-weight:bold;color:#48c0e4">96</div>
<div class="t" style="left:973px;top:497.6px;width:51px;text-align:center;font-size:14.9px;color:#52d0f4;-webkit-text-stroke:0.35px #52d0f4">96</div>

<!-- BOTTOM -->

<svg style="left:0;top:0" width="1024" height="536" fill="none" stroke="#8e979f" stroke-width="0.9" stroke-linecap="round" stroke-linejoin="round">
<path d="M105.4,519 V531.6 M109.3,522.7 L106.8,525.1 L109.3,527.5"/>
<path d="M129.6,519 V531.6 M125.8,522.7 L128.3,525.1 L125.8,527.5"/>
<g stroke="#1fc99a" stroke-width="1.3">
<path d="M143.6,526.8 V524.8 C143.6,522.8 145,521.8 147,521.8 H153.2 M151.4,519.9 L153.4,521.8 L151.4,523.7"/>
<path d="M154.4,523.8 V525.8 C154.4,527.8 153,528.8 151,528.8 H144.8 M146.6,526.9 L144.6,528.8 L146.6,530.7"/>
</g>
<path d="M171,520 H169.2 V530.8 H171 M190.2,520 H192 V530.8 H190.2"/>
<path d="M205.5,525.5 A5.8,5.8 0 0 1 217.1,525.5 Z M211.3,521.5 V525.5 L213,523.8" stroke-width="0.9"/>
<path d="M312.8,520 L322.6,528.6 M324.2,520 L314.4,528.6"/>
<circle cx="314.6" cy="530" r="1.7"/><circle cx="322.5" cy="530" r="1.7"/>
<path d="M333.5,522.5 L336.5,519.5 H340 V531.2 H333.5 Z M336.5,519.5 V522.5 H333.5 M340,519.8 H343 L345.5,522.3 V529.3 H340"/>
<rect x="354.6" y="520.6" width="11" height="10.8" rx="1.4"/>
<path d="M358,520.6 V519.4 H362.2 V520.6"/>
<path d="M380.5,519 V531.6 M375,525.3 H379 M376.6,523.7 L375,525.3 L376.6,526.9 M382,525.3 H386 M384.4,523.7 L386,525.3 L384.4,526.9"/>
<path d="M398.4,521.5 H405.4 M400,521.5 V520 H403.8 V521.5 M399,521.5 L399.5,531 H404.3 L404.8,521.5 M400.9,523.2 V529.5 M402.9,523.2 V529.5"/>
<path d="M589.2,525.8 C592,521 598.6,521 601.4,525.8 C598.6,530.4 592,530.4 589.2,525.8 Z"/>
<circle cx="595.3" cy="525.8" r="2.6"/><circle cx="595.3" cy="525.8" r="1"/>
<path d="M612.3,530 V524.5 A3.9,3.9 0 0 1 620.1,524.5 V530 L618.8,529 L617.5,530 L616.2,529 L614.9,530 L613.6,529 Z"/>
<circle cx="614.8" cy="525" r="0.5" fill="#8e979f"/><circle cx="617.6" cy="525" r="0.5" fill="#8e979f"/>
<path d="M633.5,521 V529.5 M639.7,521 V529.5 M633.5,525.2 H639.7" stroke="#b0b8bf" stroke-width="1.2"/>
<path d="M652.5,522 H661 L663.2,524 V529 L661.6,530 H652.5 Z M652.5,524.6 H663 M652.5,527.2 H663 M655.3,522 V530 M658.1,522 V530 M660.9,522 V530" stroke="#6a737b" stroke-width="0.8"/>
<path d="M676,519.5 V531 M681,519.5 V531 M673.2,522.3 H684 M673.2,528.2 H684" stroke="#b8c0c7" stroke-width="1.3"/>
<path d="M698.8,518.5 V531.6 M697.3,522.5 L693.5,530 H697.3 Z M700.3,522.5 L704.2,530 H700.3 Z"/>
<circle cx="804.8" cy="522.4" r="4.3"/>
<path d="M804.8,520.2 V524.6 M802.6,522.4 H807 M807.9,525.6 L811.4,529"/>
<path d="M826.9,519.6 L828.3,521.2 L830.4,520.9 L830.6,523.1 L832.6,524.2 L831.4,526 L832.2,528 L830.1,528.8 L829.4,530.9 L827.3,530.4 L825.6,531.8 L824.2,530.2 L822.1,530.5 L822,528.4 L820.9,526.6 L822.1,524.8 L821.3,522.8 L823.4,522 L824.1,519.9 L826.2,520.4 Z"/>
<circle cx="826.9" cy="525.7" r="2"/>
<path d="M847.2,523 H850 L854.8,519.5 V531.5 L850,528 H847.2 Z" stroke="#b0b8bf"/>
<path d="M858.8,521.5 V529.8 M860.9,521.5 V529.8 M863,521.5 V529.8 M865.1,521.5 V529.8 M867.2,521.5 V529.8" stroke="#a8b0b7" stroke-width="1.1"/>
<path d="M871.5,521.5 V529.8 M873.5,521.5 V529.8 M875.5,521.5 V529.8 M877.5,521.5 V529.8" stroke="#3e454c" stroke-width="0.9"/>
<path d="M890.2,519.5 L894,523.3 M890.2,519.5 H893 M890.2,519.5 V522.3 M900.7,519.5 L896.9,523.3 M900.7,519.5 H897.9 M900.7,519.5 V522.3 M890.2,530.7 L894,526.9 M890.2,530.7 H893 M890.2,530.7 V527.9 M900.7,530.7 L896.9,526.9 M900.7,530.7 H897.9 M900.7,530.7 V527.9"/>
<circle cx="916.4" cy="524.9" r="6"/>
</svg>
<div class="t" style="left:912.4px;top:520.2px;width:8px;text-align:center;font-size:8.8px;color:#8e979f">?</div>
<div class="t" style="left:200px;top:529px;width:22px;text-align:center;font-size:6px;color:#a3abb3">24fps</div>
<div class="t" style="left:799.8px;top:528.8px;width:13px;text-align:center;font-size:6px;color:#a3abb3">Fit</div>

<svg style="left:0;top:529.5px" width="7" height="7"><path d="M0,0 V6.5 H5.5 C2.5,6 0.5,4 0,0.5 Z" fill="#d2d4d6"/></svg>
<svg style="left:1016px;top:528px" width="8" height="8"><path d="M8,0 V8 H0 C4,8 7.5,6 8,2 Z" fill="#0a0a0a"/></svg>
</div>
</body></html>
